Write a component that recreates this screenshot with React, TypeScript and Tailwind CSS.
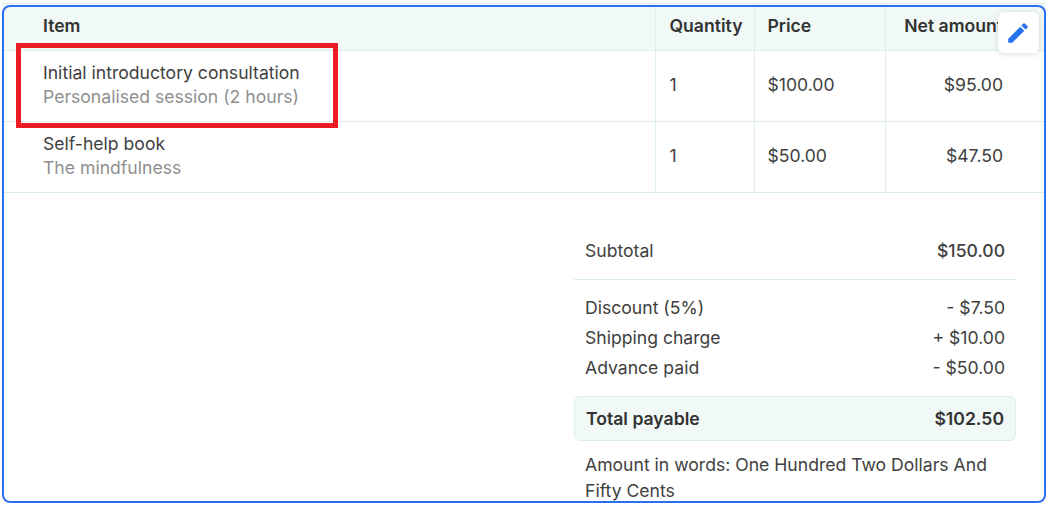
const rows = [
  { name: "Initial introductory consultation", note: "Personalised session (2 hours)", qty: "1", price: "$100.00", net: "$95.00" },
  { name: "Self-help book", note: "The mindfulness", qty: "1", price: "$50.00", net: "$47.50" },
];

const charges = [
  { label: "Discount (5%)", value: "- $7.50" },
  { label: "Shipping charge", value: "+ $10.00" },
  { label: "Advance paid", value: "- $50.00" },
];

export default function App() {
  return (
    <div className="relative h-[505px] w-[1048px] overflow-hidden bg-white px-[2px] pt-[3px] font-['Inter',sans-serif] text-[17.6px] text-[#404040]">
      <div className="border-t border-[#dcefea]">
        <table className="w-full table-fixed border-collapse">
          <colgroup>
            <col className="w-[653px]" />
            <col className="w-[99px]" />
            <col className="w-[131px]" />
            <col />
          </colgroup>
          <thead>
            <tr className="h-[46px] border-b border-[#dcefea] bg-[#f0f9f6] text-left text-[#333]">
              <th className="pb-[1px] pl-[41px] font-semibold">Item</th>
              <th className="border-l border-[#dcefea] pb-[1px] pl-[14px] font-semibold">Quantity</th>
              <th className="border-l border-[#dcefea] pb-[1px] pl-[13px] font-semibold">Price</th>
              <th className="border-l border-[#dcefea] pb-[1px] pr-[43px] text-right font-semibold whitespace-nowrap">Net amount</th>
            </tr>
          </thead>
          <tbody>
            {rows.map((row) => (
              <tr key={row.name} className="h-[71px] border-b border-[#dcefea]">
                <td className="pb-[2px] pl-[41px] leading-[24px]">
                  <div>{row.name}</div>
                  <div className="text-[#8f8f8f]">{row.note}</div>
                </td>
                <td className="border-l border-[#dcefea] pl-[14px]">{row.qty}</td>
                <td className="border-l border-[#dcefea] pl-[13px]">{row.price}</td>
                <td className="border-l border-[#dcefea] pr-[43px] text-right">{row.net}</td>
              </tr>
            ))}
          </tbody>
        </table>
      </div>

      <div className="ml-[572px] mt-[43px] w-[442px]">
        <div className="flex justify-between border-b border-[#dcefea] px-[11px] pb-[13px] leading-[30px]">
          <span>Subtotal</span>
          <span className="font-medium">$150.00</span>
        </div>
        <div className="mt-[13px] px-[11px] leading-[30px]">
          {charges.map((c) => (
            <div key={c.label} className="flex justify-between">
              <span>{c.label}</span>
              <span>{c.value}</span>
            </div>
          ))}
        </div>
        <div className="mt-[13px] flex h-[45px] items-center justify-between rounded-md border border-[#dcefea] bg-[#f0f9f6] px-[11px] pt-[2px] font-semibold text-[#333]">
          <span>Total payable</span>
          <span>$102.50</span>
        </div>
        <p className="mt-[11px] px-[11px] leading-[26px]">
          Amount in words: One Hundred Two Dollars And Fifty Cents
        </p>
      </div>

      {/* edit button sits over the header */}
      <button className="absolute left-[998px] top-[12px] flex h-[41px] w-[41px] items-center justify-center rounded-md bg-white shadow-[0_1px_6px_rgba(0,0,0,0.14)]">
        <svg viewBox="0 0 24 24" className="mr-[2px] h-[26px] w-[26px] fill-[#2970ee]">
          <path d="M3 17.25V21h3.75L17.81 9.94l-3.75-3.75L3 17.25zM20.71 7.04a1 1 0 0 0 0-1.41l-2.34-2.34a1 1 0 0 0-1.41 0l-1.83 1.83 3.75 3.75 1.83-1.83z" />
        </svg>
      </button>

      {/* selection outline and annotation box on top of the screenshot */}
      <div className="pointer-events-none absolute left-[2px] top-[5px] h-[498px] w-[1044px] rounded-lg border-2 border-[#2970ee]" />
      <div className="pointer-events-none absolute left-[16px] top-[43px] h-[85px] w-[322px] border-[5px] border-[#ec1c24]" />
    </div>
  );
}
